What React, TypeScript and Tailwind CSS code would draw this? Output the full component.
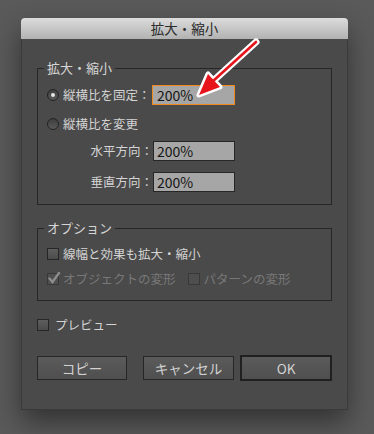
import React from "react";

const FONT = '"Noto Sans CJK JP", "Noto Sans", sans-serif';

function Radio({ checked }: { checked?: boolean }) {
  return (
    <span className="w-[12px] h-[12px] rounded-full border border-[#232323] bg-gradient-to-b from-[#3e3e3e] to-[#5a5a5a] flex items-center justify-center shrink-0">
      {checked && <span className="w-[4px] h-[4px] rounded-full bg-[#e6e6e6]" />}
    </span>
  );
}

function Check({ checked, disabled }: { checked?: boolean; disabled?: boolean }) {
  return (
    <span
      className={
        "relative w-[12px] h-[12px] border shrink-0 " +
        (disabled
          ? "border-[#383838] bg-[#4e4e4e]"
          : "border-[#262626] bg-gradient-to-b from-[#5e5e5e] to-[#4c4c4c]")
      }
    >
      {checked && (
        <svg className="absolute left-[-1px] top-[-3px]" width="14" height="14" viewBox="0 0 14 14">
          <path d="M2.5 7.5 L5.5 11 L12 2" fill="none" stroke="#8c8c8c" strokeWidth="2.4" strokeLinecap="round" />
        </svg>
      )}
    </span>
  );
}

function Btn({ children, primary }: { children: React.ReactNode; primary?: boolean }) {
  return (
    <div
      className={
        "flex items-center justify-center text-[13.5px] text-[#d2d2d2] bg-gradient-to-b from-[#5b5b5b] to-[#4f4f4f] " +
        (primary ? "w-[92px] h-[26px] border-2 border-[#202020]" : "w-[91px] h-[24px] border border-[#262626]")
      }
    >
      {children}
    </div>
  );
}

export default function App() {
  return (
    <div
      className="relative w-[374px] h-[434px] bg-[#5a5a5a] pt-[18px] pl-[21px] overflow-hidden"
      style={{ fontFamily: FONT }}
    >
      <div className="w-[327px] h-[392px] flex flex-col shadow-[0_12px_28px_rgba(0,0,0,0.45)] rounded-t-[4px]">
        <div className="h-[21px] rounded-t-[4px] bg-gradient-to-b from-[#dcdcdc] to-[#b2b2b2] flex items-center justify-center text-[13.5px] text-[#2a2a2a]">
          拡大・縮小
        </div>
        <div className="flex-1 bg-[#4a4a4a] border-x border-b border-[#3a3a3a] px-[15px] pt-[21px] text-[#d4d4d4] text-[12.5px]">
          <fieldset className="border border-[#262626] pt-[9px] pb-[12px]">
            <legend className="ml-[6px] px-[3px] leading-[16px] text-[13px] text-[#d6d6d6]">拡大・縮小</legend>
            <div className="flex items-center h-[20px] pl-[9px]">
              <Radio checked />
              <span className="ml-[4px] w-[89px] whitespace-nowrap">縦横比を固定：</span>
              <div className="w-[83px] h-[20px] border border-[#f08a1c] bg-[#a6a6a6] text-[#151515] text-[14px] flex items-center pl-[4px]">
                200%
              </div>
            </div>
            <div className="flex items-center h-[20px] pl-[9px] mt-[9px]">
              <Radio />
              <span className="ml-[4px] whitespace-nowrap">縦横比を変更</span>
            </div>
            <div className="flex items-center h-[20px] mt-[7px]">
              <span className="w-[115px] text-right whitespace-nowrap">水平方向：</span>
              <div className="w-[82px] h-[20px] border border-[#262626] bg-[#a6a6a6] text-[#151515] text-[14px] flex items-center pl-[3px]">
                200%
              </div>
            </div>
            <div className="flex items-center h-[20px] mt-[11px]">
              <span className="w-[115px] text-right whitespace-nowrap">垂直方向：</span>
              <div className="w-[82px] h-[20px] border border-[#262626] bg-[#a6a6a6] text-[#151515] text-[14px] flex items-center pl-[3px]">
                200%
              </div>
            </div>
          </fieldset>

          <fieldset className="border border-[#262626] mt-[15px] pt-[8px] pb-[11px]">
            <legend className="ml-[6px] px-[3px] leading-[16px] text-[13px] text-[#d6d6d6]">オプション</legend>
            <div className="flex items-center h-[20px] pl-[9px]">
              <Check />
              <span className="ml-[4px] whitespace-nowrap">線幅と効果も拡大・縮小</span>
            </div>
            <div className="flex items-center h-[20px] pl-[9px] mt-[5px] text-[#787878]">
              <Check checked disabled />
              <span className="ml-[4px] whitespace-nowrap">オブジェクトの変形</span>
              <span className="ml-[12px] flex items-center">
                <Check disabled />
              </span>
              <span className="ml-[4px] whitespace-nowrap">パターンの変形</span>
            </div>
          </fieldset>

          <div className="flex items-center h-[20px] mt-[14px]">
            <Check />
            <span className="ml-[6px] whitespace-nowrap">プレビュー</span>
          </div>

          <div className="flex items-center mt-[20px] h-[26px]">
            <Btn>コピー</Btn>
            <div className="ml-[16px]">
              <Btn>キャンセル</Btn>
            </div>
            <div className="ml-[6px]">
              <Btn primary>OK</Btn>
            </div>
          </div>
        </div>
      </div>

      <svg className="absolute left-0 top-0 pointer-events-none" width="374" height="434" viewBox="0 0 374 434">
        <g>
          <line x1="256" y1="42" x2="212" y2="82" stroke="#ffffff" strokeWidth="7" strokeLinecap="round" />
          <polygon points="199,95 220,87 208,74" fill="#ffffff" stroke="#ffffff" strokeWidth="5" strokeLinejoin="round" />
          <line x1="256" y1="42" x2="212" y2="82" stroke="#e8141b" strokeWidth="2.6" strokeLinecap="round" />
          <polygon points="199,95 220,87 208,74" fill="#e8141b" />
        </g>
      </svg>
    </div>
  );
}
